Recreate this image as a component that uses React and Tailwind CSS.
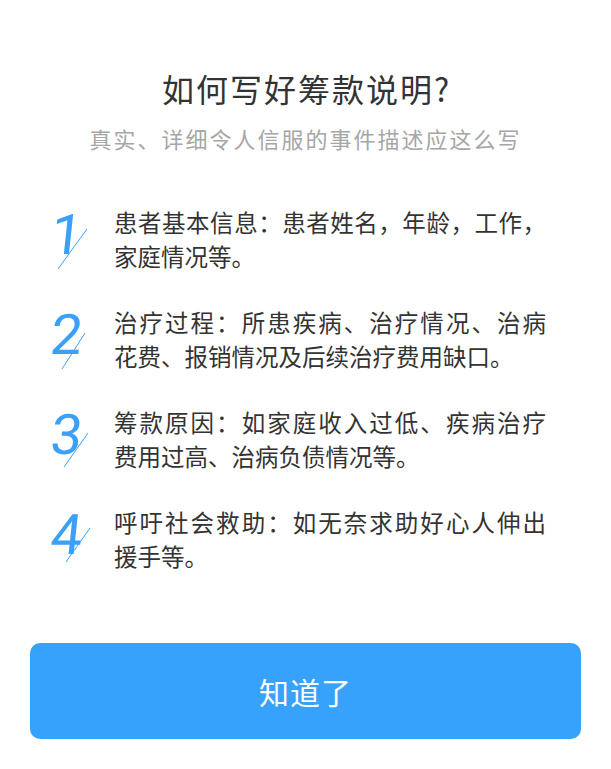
import React from 'react';

const items = [
  { n: '1', lines: ['患者基本信息：患者姓名，年龄，工作，', '家庭情况等。'], slash: [12, 62, 41, 22] },
  { n: '2', lines: ['治疗过程：所患疾病、治疗情况、治病', '花费、报销情况及后续治疗费用缺口。'], slash: [16, 62, 39, 26] },
  { n: '3', lines: ['筹款原因：如家庭收入过低、疾病治疗', '费用过高、治病负债情况等。'], slash: [18, 60, 42, 26] },
  { n: '4', lines: ['呼吁社会救助：如无奈求助好心人伸出', '援手等。'], slash: [20, 55, 44, 21] },
];

const cjk = { fontFamily: '"Noto Sans CJK SC", "Noto Sans", sans-serif' };

const App = () => {
  return (
    <div className="w-full min-h-[769px] bg-white flex flex-col" style={cjk}>
      <h1 className="pt-[68px] pl-[2px] text-center text-[32px] leading-[40px] tracking-[2px] text-[#333333] font-normal">
        如何写好筹款说明?
      </h1>
      <p className="mt-[15px] text-center text-[22px] leading-[30px] tracking-[2px] text-[#a6a6a6]">
        真实、详细令人信服的事件描述应这么写
      </p>

      <div className="mt-[52px] pl-[46px] flex flex-col gap-[32px]">
        {items.map((it) => (
          <div key={it.n} className="flex">
            <div className="relative w-[68px] h-[60px] mt-[2px] shrink-0">
              <span
                className="block pl-[5px] text-[56px] leading-[56px] font-normal text-[#3aa0f8] -skew-x-6"
                style={{ fontFamily: 'Roboto, "Noto Sans", sans-serif' }}
              >
                {it.n}
              </span>
              <svg className="absolute left-0 top-0" width="68" height="70" viewBox="0 0 68 70">
                <line
                  x1={it.slash[0]}
                  y1={it.slash[1]}
                  x2={it.slash[2]}
                  y2={it.slash[3]}
                  stroke="#3aa0f8"
                  strokeWidth="1"
                />
              </svg>
            </div>
            <div className="w-[432px] text-[23.5px] leading-[34px] text-[#333333]">
              <span className="block text-justify [text-align-last:justify] whitespace-nowrap">{it.lines[0]}</span>
              <span className="block">{it.lines[1]}</span>
            </div>
          </div>
        ))}
      </div>

      <div className="mt-[70px] px-[30px]">
        <button className="w-full h-[96px] rounded-[10px] bg-[#37a2fc] text-white text-[30px] tracking-[1px]">
          知道了
        </button>
      </div>
    </div>
  );
};

export default App;
